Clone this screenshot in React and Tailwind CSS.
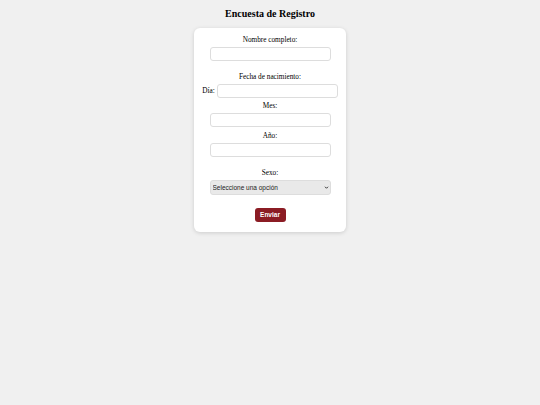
import React from 'react';

export default function App() {
    return (
        <div className="min-h-[405px] bg-[#f0f0f0] pt-[7px] font-['Liberation_Serif',serif]">
            <h1 className="text-center text-[10px] leading-[13px] font-bold text-black">
                Encuesta de Registro
            </h1>

            {/* Card */}
            <div className="mx-auto mt-[8px] w-[152px] rounded-[6px] bg-white px-[8px] pt-[7px] pb-[8px] text-center shadow-[0_1px_4px_rgba(0,0,0,0.15)]">
                <form onSubmit={e => e.preventDefault()}>
                    <label className="block text-[7.25px] leading-[10px] text-black" htmlFor="nombre">
                        Nombre completo:
                    </label>
                    <input
                        id="nombre"
                        type="text"
                        className="mt-[2px] block mx-auto h-[14px] w-[121px] rounded-[3px] border border-[#dddddd] bg-white"
                    />

                    <p className="mt-[11px] text-[7.25px] leading-[10px] text-black">Fecha de nacimiento:</p>
                    <div className="mt-[2px] flex items-center justify-center gap-[2px]">
                        <label className="text-[7.25px] leading-[10px] text-black" htmlFor="dia">Día:</label>
                        <input
                            id="dia"
                            type="text"
                            className="h-[14px] w-[121px] rounded-[3px] border border-[#dddddd] bg-white"
                        />
                    </div>

                    <label className="mt-[3px] block text-[7.25px] leading-[10px] text-black" htmlFor="mes">
                        Mes:
                    </label>
                    <input
                        id="mes"
                        type="text"
                        className="mt-[2px] block mx-auto h-[14px] w-[121px] rounded-[3px] border border-[#dddddd] bg-white"
                    />

                    <label className="mt-[4px] block text-[7.25px] leading-[10px] text-black" htmlFor="anio">
                        Año:
                    </label>
                    <input
                        id="anio"
                        type="text"
                        className="mt-[2px] block mx-auto h-[14px] w-[121px] rounded-[3px] border border-[#dddddd] bg-white"
                    />

                    <label className="mt-[11px] block text-[7.25px] leading-[10px] text-black" htmlFor="sexo">
                        Sexo:
                    </label>
                    <div className="relative mx-auto mt-[2px] w-[121px]">
                        <select
                            id="sexo"
                            className="block h-[15px] w-full appearance-none rounded-[3px] border border-[#dddddd] bg-[#e9e9e9] pl-[2px] text-left font-['Liberation_Sans',sans-serif] text-[6.5px] text-[#222]"
                        >
                            <option>Seleccione una opción</option>
                            <option>Masculino</option>
                            <option>Femenino</option>
                        </select>
                        <svg
                            className="pointer-events-none absolute right-[2px] top-[5px]"
                            width="5"
                            height="5"
                            viewBox="0 0 10 10"
                        >
                            <path d="M2 3.5 L5 6.5 L8 3.5" fill="none" stroke="#222" strokeWidth="1.8" />
                        </svg>
                    </div>

                    <button
                        type="submit"
                        className="mt-[13px] h-[14px] w-[31px] rounded-[3px] bg-[#8b1c24] font-['Liberation_Sans',sans-serif] text-[6.5px] font-bold text-white"
                    >
                        Enviar
                    </button>
                </form>
            </div>
        </div>
    );
}
